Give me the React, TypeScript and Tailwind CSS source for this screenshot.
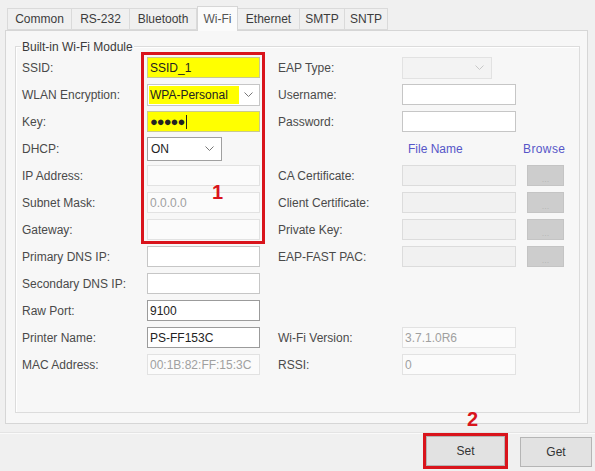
import React from 'react';

type Variant = 'yellow' | 'white' | 'dark' | 'disabled' | 'file';

const tabs = [
  { name: 'Common', w: 'w-[65px]' },
  { name: 'RS-232', w: 'w-[58px]' },
  { name: 'Bluetooth', w: 'w-[67px]' },
  { name: 'Wi-Fi', w: 'w-[41px]', active: true },
  { name: 'Ethernet', w: 'w-[62px]' },
  { name: 'SMTP', w: 'w-[45px]' },
  { name: 'SNTP', w: 'w-[43px]' },
];

const inputStyles: Record<Variant, string> = {
  yellow: 'bg-[#ffff00] border-[#c9c98e] text-[#222]',
  white: 'bg-white border-[#c6c6c6] text-[#222]',
  dark: 'bg-white border-[#9b9b9b] text-[#222]',
  disabled: 'bg-[#fbfbfb] border-[#e2e2e2] text-[#a0a0a0]',
  file: 'bg-[#f1f1f1] border-[#dcdcdc] text-[#a0a0a0]',
};

const Chevron = ({ light }: { light?: boolean }) => (
  <svg width="9" height="5" viewBox="0 0 9 5" className="shrink-0">
    <path d="M0.5 0.5 L4.5 4.5 L8.5 0.5" fill="none" stroke={light ? '#c8c8c8' : '#777'} strokeWidth="1" />
  </svg>
);

const Field = ({ value = '', variant = 'white', children }: { value?: string; variant?: Variant; children?: React.ReactNode }) => (
  <div className={`h-[21px] w-full border flex items-center px-[2px] text-[12px] ${inputStyles[variant]}`}>
    {children ?? value}
  </div>
);

const Label = ({ text }: { text: string }) => <span className="text-[12px] text-[#4a4a4a] whitespace-nowrap">{text}</span>;

const BrowseButton = () => (
  <div className="h-[21px] w-[37px] bg-[#cdcdcd] border border-[#c4c4c4] flex items-end justify-center text-[9px] text-[#b8b8b8] leading-[12px]">
    ...
  </div>
);

// left column: label + control per row
const leftRows: { label: string; control: React.ReactNode }[] = [
  { label: 'SSID:', control: <Field value="SSID_1" variant="yellow" /> },
  {
    label: 'WLAN Encryption:',
    control: (
      <div className="h-[22px] w-full border border-[#c6c6c6] bg-white flex items-center pl-[1px] pr-[6px] justify-between">
        <span className="bg-[#ffff00] text-[12px] text-[#222] h-[18px] w-[90px] flex items-center px-[1px]">WPA-Personal</span>
        <Chevron />
      </div>
    ),
  },
  {
    label: 'Key:',
    control: (
      <Field variant="yellow">
        <span className="text-[13px] tracking-[-1px] text-[#222]">●●●●●</span>
        <span className="ml-[2px] h-[14px] w-px bg-[#222]" />
      </Field>
    ),
  },
  {
    label: 'DHCP:',
    control: (
      <div className="h-[24px] w-[75px] border border-[#a0a0a0] bg-white flex items-center justify-between pl-[3px] pr-[7px] text-[12px] text-[#222]">
        ON
        <Chevron />
      </div>
    ),
  },
  { label: 'IP Address:', control: <Field variant="disabled" /> },
  { label: 'Subnet Mask:', control: <Field value="0.0.0.0" variant="disabled" /> },
  { label: 'Gateway:', control: <Field variant="disabled" /> },
  { label: 'Primary DNS IP:', control: <Field variant="white" /> },
  { label: 'Secondary DNS IP:', control: <Field variant="white" /> },
  { label: 'Raw Port:', control: <Field value="9100" variant="dark" /> },
  { label: 'Printer Name:', control: <Field value="PS-FF153C" variant="dark" /> },
  { label: 'MAC Address:', control: <Field value="00:1B:82:FF:15:3C" variant="disabled" /> },
];

const rightRows: { label?: string; control?: React.ReactNode; browse?: React.ReactNode }[] = [
  {
    label: 'EAP Type:',
    control: (
      <div className="h-[22px] w-[90px] border border-[#e2e2e2] bg-[#f3f3f3] flex items-center justify-end pr-[7px]">
        <Chevron light />
      </div>
    ),
  },
  { label: 'Username:', control: <Field variant="white" /> },
  { label: 'Password:', control: <Field variant="white" /> },
  {
    control: <div className="text-center text-[12px] text-[#5656c8] pl-[6px]">File Name</div>,
    browse: <div className="text-[12px] text-[#5656c8] -ml-[4px] tracking-[0.4px]">Browse</div>,
  },
  { label: 'CA Certificate:', control: <Field variant="file" />, browse: <BrowseButton /> },
  { label: 'Client Certificate:', control: <Field variant="file" />, browse: <BrowseButton /> },
  { label: 'Private Key:', control: <Field variant="file" />, browse: <BrowseButton /> },
  { label: 'EAP-FAST PAC:', control: <Field variant="file" />, browse: <BrowseButton /> },
  {},
  {},
  { label: 'Wi-Fi Version:', control: <Field value="3.7.1.0R6" variant="disabled" /> },
  { label: 'RSSI:', control: <Field value="0" variant="disabled" /> },
];

export default function App() {
  return (
    <div className="relative w-[595px] h-[471px] overflow-hidden bg-[#f0f0f0] font-['Liberation_Sans',Arial,sans-serif] text-[12px] text-[#333]">
      {/* tab strip */}
      <div className="flex items-end h-[30px] pl-[7px]">
        {tabs.map((t) =>
          t.active ? (
            <div
              key={t.name}
              className={`${t.w} h-[25px] -mb-px z-10 bg-[#fbfbfb] border border-b-0 border-[#d6d6d6] flex items-center justify-center text-[#555]`}
            >
              {t.name}
            </div>
          ) : (
            <div
              key={t.name}
              className={`${t.w} h-[22px] bg-[#f0f0f0] border border-l-0 first:border-l border-[#dadada] flex items-center justify-center text-[#3c3c3c]`}
            >
              {t.name}
            </div>
          )
        )}
      </div>

      {/* tab page */}
      <div className="ml-[5px] mr-[7px] h-[394px] border border-[#d6d6d6] bg-[#f7f7f7] pt-[15px] pl-[9px] pr-[7px]">
        <div className="relative h-[367px] border border-[#dcdcdc] shadow-[inset_1px_1px_0_#ffffff] pl-[6px] pt-[7px]">
          <span className="absolute -top-[7px] left-[5px] bg-[#f7f7f7] px-[1px] text-[12px] leading-[14px] text-[#3a3a3a]">
            Built-in Wi-Fi Module
          </span>
          <div className="grid grid-cols-[125px_113px_18px_124px_114px_11px_37px] auto-rows-[27px] items-center">
            {leftRows.map((row, i) => {
              const r = rightRows[i];
              return (
                <React.Fragment key={row.label}>
                  <Label text={row.label} />
                  <div className="flex items-center">{row.control}</div>
                  <div />
                  <div>{r.label && <Label text={r.label} />}</div>
                  <div className="flex items-center">{r.control}</div>
                  <div />
                  <div className="flex items-center">{r.browse}</div>
                </React.Fragment>
              );
            })}
          </div>
        </div>
      </div>

      {/* bottom button bar */}
      <div className="mt-[8px] border-t border-[#e4e4e4] shadow-[inset_0_1px_0_#fafafa]">
        <div className="flex justify-end items-start pr-[3px]">
          <div className="border-[3px] border-[#d9141c] w-[85px] h-[36px]">
            <button className="w-full h-full bg-[#e2e2e2] border border-[#b5b5b5] text-[12px] text-[#333]">Set</button>
          </div>
          <button className="ml-[12px] mt-[4px] w-[72px] h-[30px] bg-[#e2e2e2] border border-[#b5b5b5] text-[12px] text-[#333]">
            Get
          </button>
        </div>
      </div>

      {/* callout marks */}
      <div className="absolute left-[141px] top-[52px] w-[124px] h-[192px] border-[3px] border-[#d9141c]" />
      <span className="absolute left-[212px] top-[182px] text-[20px] leading-none font-bold text-[#d9141c]">1</span>
      <span className="absolute left-[467px] top-[409px] text-[20px] leading-none font-bold text-[#d9141c]">2</span>
    </div>
  );
}
